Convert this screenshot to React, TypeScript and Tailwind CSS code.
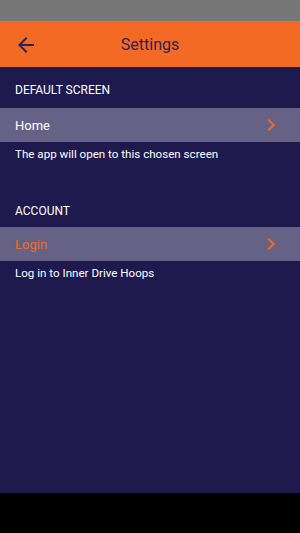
import React from "react";

function Chevron() {
  return (
    <svg width="24" height="24" viewBox="0 0 24 24" className="fill-[#f26a24]">
      <path d="M10 6L8.59 7.41 13.17 12l-4.58 4.59L10 18l6-6z" />
    </svg>
  );
}

export default function App() {
  return (
    <div className="w-[300px] h-[533px] flex flex-col bg-black" style={{ fontFamily: "Roboto, 'Noto Sans', sans-serif" }}>
      <div className="h-[21px] bg-[#777777]" />
      <div className="h-[46px] bg-[#f26a24] flex items-center relative">
        <div className="w-[52px] flex justify-center pt-[1px]">
          <svg width="24" height="24" viewBox="0 0 24 24" className="fill-[#2b2459]">
            <path d="M20 11H7.83l5.59-5.59L12 4l-8 8 8 8 1.41-1.41L7.83 13H20v-2z" />
          </svg>
        </div>
        <div className="absolute inset-0 flex items-center justify-center pt-[2px] text-[16px] text-[#2b2459] pointer-events-none">
          Settings
        </div>
      </div>
      <div className="h-[426px] bg-[#1e1a4d] flex flex-col text-white">
        <div className="h-[41px] px-[15px] flex items-center text-[12px] pt-[4px]">DEFAULT SCREEN</div>
        <div className="h-[34px] bg-[#656285] flex items-center justify-between pl-[15px] pr-[17px]">
          <span className="text-[13px] pt-[1px]">Home</span>
          <Chevron />
        </div>
        <div className="h-[26px] px-[15px] flex items-center text-[11.6px]">The app will open to this chosen screen</div>
        <div className="h-[59px] px-[15px] flex items-end pb-[7px] text-[12px]">ACCOUNT</div>
        <div className="h-[34px] bg-[#656285] flex items-center justify-between pl-[15px] pr-[17px]">
          <span className="text-[13px] pt-[1px] text-[#f26a24]">Login</span>
          <Chevron />
        </div>
        <div className="h-[26px] px-[15px] flex items-center text-[11.6px]">Log in to Inner Drive Hoops</div>
      </div>
    </div>
  );
}
